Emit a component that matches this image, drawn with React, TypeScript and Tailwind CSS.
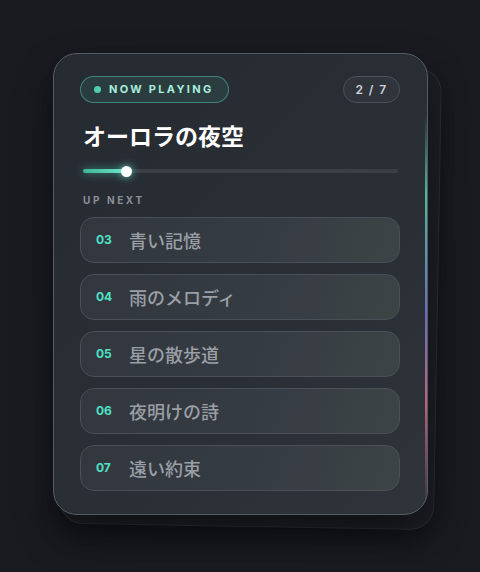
import React from "react";

const tracks = [
  { n: "03", t: "青い記憶" },
  { n: "04", t: "雨のメロディ" },
  { n: "05", t: "星の散歩道" },
  { n: "06", t: "夜明けの詩" },
  { n: "07", t: "遠い約束" },
];

export default function App() {
  return (
    <div
      className="w-[480px] h-[572px] bg-[#191b21] flex items-start justify-start pt-[53px] pl-[53px]"
      style={{ fontFamily: 'Inter, "Noto Sans CJK JP", sans-serif' }}
    >
      <div className="relative w-[375px] h-[462px]">
        {/* back card */}
        <div className="absolute inset-0 translate-x-[10px] translate-y-[12px] rotate-[1deg] rounded-[24px] border border-[#2a2f35] bg-[#1c1f25] shadow-[0_10px_24px_rgba(0,0,0,0.3)]" />
        {/* main card */}
        <div className="relative w-full h-full rounded-[24px] border border-[#565c63] bg-[linear-gradient(135deg,#262a31_0%,#2a2f36_60%,#2e3439_100%)] shadow-[0_20px_40px_rgba(0,0,0,0.45)] overflow-hidden px-[26px] pt-[22px]">
          {/* right edge gradient line */}
          <div className="absolute right-0 top-[60px] h-[400px] w-[2px] bg-[linear-gradient(180deg,rgba(79,200,160,0)_0%,#4fb89a_20%,#6a6ac0_50%,#c0607e_72%,rgba(192,96,126,0)_100%)]" />

          <div className="flex items-center justify-between">
            <div className="flex items-center h-[27px] w-[149px] rounded-full border border-[rgba(94,214,186,0.45)] bg-[rgba(70,170,150,0.14)] pl-[13px]">
              <span className="w-[7px] h-[7px] rounded-full bg-[#4fcfae]" />
              <span className="ml-[8px] text-[11px] font-bold tracking-[0.21em] text-[#a9ecdc] leading-none">
                NOW PLAYING
              </span>
            </div>
            <div className="flex items-center justify-center h-[27px] w-[57px] rounded-full border border-[#4d535a] bg-[#30353c] text-[12px] font-semibold tracking-[0.12em] text-[#cfd3d8] leading-none mr-[1px]">
              2 / 7
            </div>
          </div>

          <div className="mt-[20px] pl-[3px] text-[23px] font-bold text-white leading-[28px]">
            オーロラの夜空
          </div>

          <div className="relative mt-[14px] ml-[3px] mr-[3px] h-[12px] flex items-center">
            <div className="w-full h-[4px] rounded-full bg-[#3a3f46]" />
            <div className="absolute left-0 top-[4px] h-[4px] w-[44px] rounded-full bg-[linear-gradient(90deg,#3fb597,#6fe3c8)] shadow-[0_0_8px_rgba(80,220,190,0.6)]" />
            <div className="absolute left-[38px] top-[1px] w-[11px] h-[11px] rounded-full bg-white shadow-[0_0_8px_rgba(120,240,220,0.8)]" />
          </div>

          <div className="mt-[17px] pl-[3px] text-[10px] font-bold tracking-[0.26em] text-[#8b9097] leading-[12px]">
            UP NEXT
          </div>

          <div className="mt-[11px] flex flex-col gap-[11px] mr-[1px]">
            {tracks.map((tr) => (
              <div
                key={tr.n}
                className="flex items-center h-[46px] rounded-[14px] border border-[#4a5057] bg-[linear-gradient(110deg,#32373e_0%,#363c43_60%,#3d4445_100%)] pl-[15px]"
              >
                <span className="w-[33px] text-[12px] font-bold text-[#4fe0c6] leading-none">
                  {tr.n}
                </span>
                <span
                  className="text-[18px] font-medium text-[#9a9fa5] leading-none"
                  style={{ fontFamily: '"Noto Sans CJK JP", sans-serif' }}
                >
                  {tr.t}
                </span>
              </div>
            ))}
          </div>
        </div>
      </div>
    </div>
  );
}
